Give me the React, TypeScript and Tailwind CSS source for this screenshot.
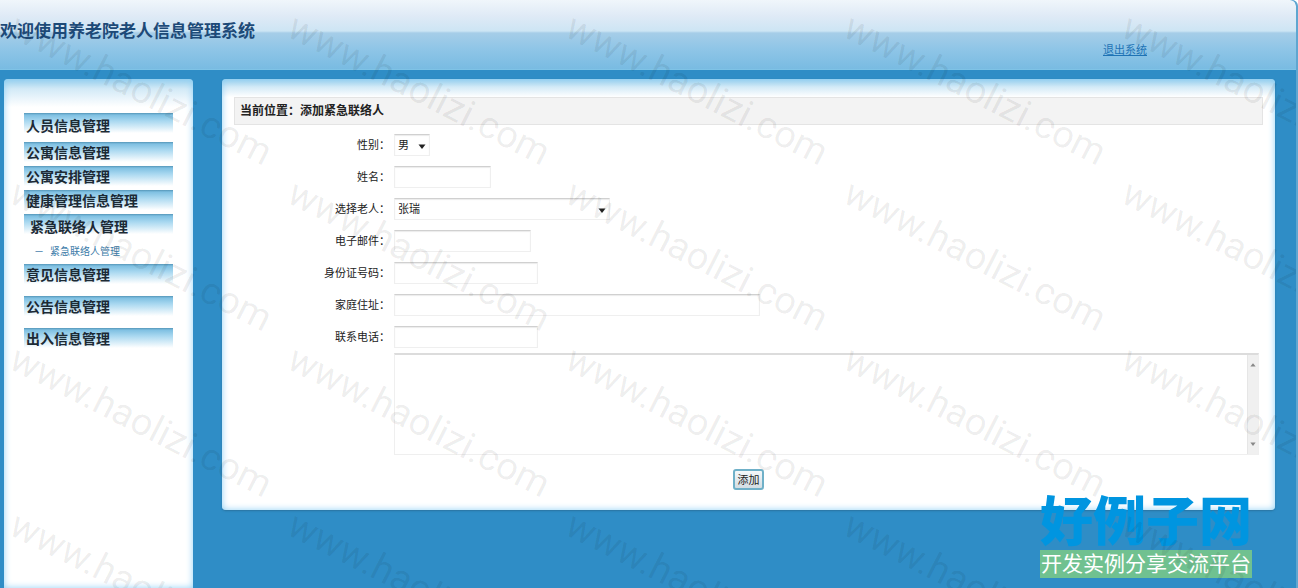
interface MenuItem {
  title: string;
  className: string;
  children?: string[];
}

const menu: MenuItem[] = [
  { title: "人员信息管理", className: "h-[29px] pt-0.5" },
  { title: "公寓信息管理", className: "h-6" },
  { title: "公寓安排管理", className: "h-6" },
  { title: "健康管理信息管理", className: "h-6" },
  {
    title: "紧急联络人管理",
    className: "h-[50px] pl-1.5 pt-0.5",
    children: ["紧急联络人管理"],
  },
  { title: "意见信息管理", className: "h-8" },
  { title: "公告信息管理", className: "h-8" },
  { title: "出入信息管理", className: "h-8" },
];

const fieldStyle =
  "h-[22px] rounded-none border border-[#efefef] border-t-[#d0d0d0] bg-white px-[3px] text-[11px] text-[#222] shadow-[inset_0_1px_1px_#ececec] outline-none";

function Header() {
  return (
    <header className="flex h-[70px] shrink-0 items-start justify-between rounded-tr-md border-b border-[#7fc3e6] bg-[linear-gradient(to_bottom,#f0f6fb_0,#dfeaf6_16px,#cde5f4_31px,#a6cde8_33px,#90c6e7_48px,#79bbe2_100%)]">
      <h1 className="pt-5 text-[17px] leading-6 font-bold text-[#1d4a78]">
        欢迎使用养老院老人信息管理系统
      </h1>
      <a
        href="#logout"
        className="mt-[42px] mr-[149px] text-[11px] leading-4 text-[#1e73b5] underline"
      >
        退出系统
      </a>
    </header>
  );
}

function Sidebar() {
  return (
    <aside className="w-[189px] shrink-0 rounded-t bg-[linear-gradient(to_bottom,#9bd0ec_0,#d3eaf7_10px,#ffffff_28px)] px-5 pt-[34px] shadow-[inset_0_0_7px_#8fd0f5]">
      <ul>
        {menu.map((item) => (
          <li
            key={item.title}
            className={`bg-[linear-gradient(to_bottom,#5596b8_0,#7fc0e2_2px,#a9d8f0_8px,#ffffff_20px)] bg-[length:100%_20px] bg-no-repeat pl-0.5 ${item.className}`}
          >
            <a
              href="#menu"
              className="block text-sm leading-[22px] font-bold text-[#1c2a35]"
            >
              {item.title}
            </a>
            {item.children?.map((child) => (
              <a
                key={child}
                href="#submenu"
                className="flex gap-1.5 pt-1 pl-1 text-[10px] leading-5 text-[#3b7ba8]"
              >
                <span>－</span>
                {child}
              </a>
            ))}
          </li>
        ))}
      </ul>
    </aside>
  );
}

function Triangle({ className }: { className: string }) {
  return (
    <svg viewBox="0 0 8 5" aria-hidden="true" className={className}>
      <path d="M0.5 0.5h7L4 5z" fill="currentColor" />
    </svg>
  );
}

interface SelectProps {
  id: string;
  value: string;
  className: string;
}

function Select({ id, value, className }: SelectProps) {
  return (
    <div className={`relative flex ${className}`}>
      <select id={id} className={`${fieldStyle} w-full appearance-none`}>
        <option>{value}</option>
      </select>
      <Triangle className="pointer-events-none absolute top-2.5 right-1 h-[5px] w-2 text-[#222]" />
    </div>
  );
}

interface RowProps {
  id: string;
  label: string;
  children: React.ReactNode;
}

function Row({ id, label, children }: RowProps) {
  return (
    <div className="flex h-8 items-center">
      <label
        htmlFor={id}
        className="w-40 shrink-0 pr-1 text-right text-[11px] leading-4 text-[#222]"
      >
        {label}：
      </label>
      {children}
    </div>
  );
}

function ContactForm() {
  return (
    <form onSubmit={(e) => e.preventDefault()}>
      <div className="pt-1">
        <Row id="sex" label="性别">
          <Select id="sex" value="男" className="w-9" />
        </Row>
        <Row id="name" label="姓名">
          <input id="name" className={`${fieldStyle} w-[97px]`} />
        </Row>
        <Row id="elder" label="选择老人">
          <Select id="elder" value="张瑞" className="w-[216px]" />
        </Row>
        <Row id="email" label="电子邮件">
          <input id="email" className={`${fieldStyle} w-[137px]`} />
        </Row>
        <Row id="idcard" label="身份证号码">
          <input id="idcard" className={`${fieldStyle} w-36`} />
        </Row>
        <Row id="address" label="家庭住址">
          <input id="address" className={`${fieldStyle} w-[366px]`} />
        </Row>
        <Row id="phone" label="联系电话">
          <input id="phone" className={`${fieldStyle} w-36`} />
        </Row>
      </div>
      <div className="mr-1 ml-40 flex h-[102px] border border-[#efefef] border-t-2 border-t-[#dcdcdc]">
        <textarea
          aria-label="备注"
          className="min-w-0 flex-1 resize-none bg-white p-1 text-[11px] outline-none"
        />
        <div className="flex w-[11px] flex-col items-center justify-between border-l border-[#e6e6e6] bg-[#f0f0f0] py-2 text-[#888]">
          <Triangle className="h-1 w-1.5 rotate-180" />
          <Triangle className="h-1 w-1.5" />
        </div>
      </div>
      <div className="flex justify-center pt-3.5">
        <button
          type="submit"
          className="h-[21px] w-[31px] rounded-[3px] border-2 border-[#6fb0c8] bg-linear-to-b from-[#f4f8fa] to-[#d3dde3] text-[11px] leading-4 text-[#222]"
        >
          添加
        </button>
      </div>
    </form>
  );
}

function Watermark() {
  return (
    <div
      aria-hidden="true"
      className="pointer-events-none absolute inset-0 grid auto-rows-[166px] grid-cols-[repeat(5,278px)] overflow-hidden pt-1.5 pl-[22px] select-none"
    >
      {Array.from({ length: 20 }, (_, i) => (
        <span
          key={i}
          className="origin-top-left rotate-[27deg] font-[Roboto] text-[38px] leading-10 whitespace-nowrap text-black/7"
        >
          www.haolizi.com
        </span>
      ))}
    </div>
  );
}

function SiteLogo() {
  return (
    <div className="absolute right-11 bottom-2.5 w-[212px] text-center whitespace-nowrap">
      <p className="text-[53px] leading-[54px] font-black text-[#0095e0]">
        好例子网
      </p>
      <p className="bg-[#70c190] text-[21px] leading-7 text-white">
        开发实例分享交流平台
      </p>
    </div>
  );
}

export default function App() {
  return (
    <div className="relative flex min-h-screen flex-col overflow-hidden rounded-tr-md border-r-2 border-[#5fa6d0] bg-[#2f8dc6] font-['Liberation_Sans','Noto_Sans_CJK_SC',sans-serif]">
      <Header />
      <div className="flex flex-1 gap-[29px] pt-[9px] pr-[21px] pl-1">
        <Sidebar />
        <main className="min-w-0 flex-1 self-start rounded bg-[linear-gradient(to_bottom,#9bd0ec_0,#d3eaf7_8px,#ffffff_18px)] px-3 pt-[18px] pb-5 shadow-[inset_0_0_7px_#8fd0f5,0_1px_2px_#2a739f]">
          <h2 className="border border-[#e4e4e4] bg-[#f3f3f3] px-[5px] text-xs leading-[26px] font-bold text-[#222]">
            当前位置：添加紧急联络人
          </h2>
          <ContactForm />
        </main>
      </div>
      <SiteLogo />
      <Watermark />
    </div>
  );
}
